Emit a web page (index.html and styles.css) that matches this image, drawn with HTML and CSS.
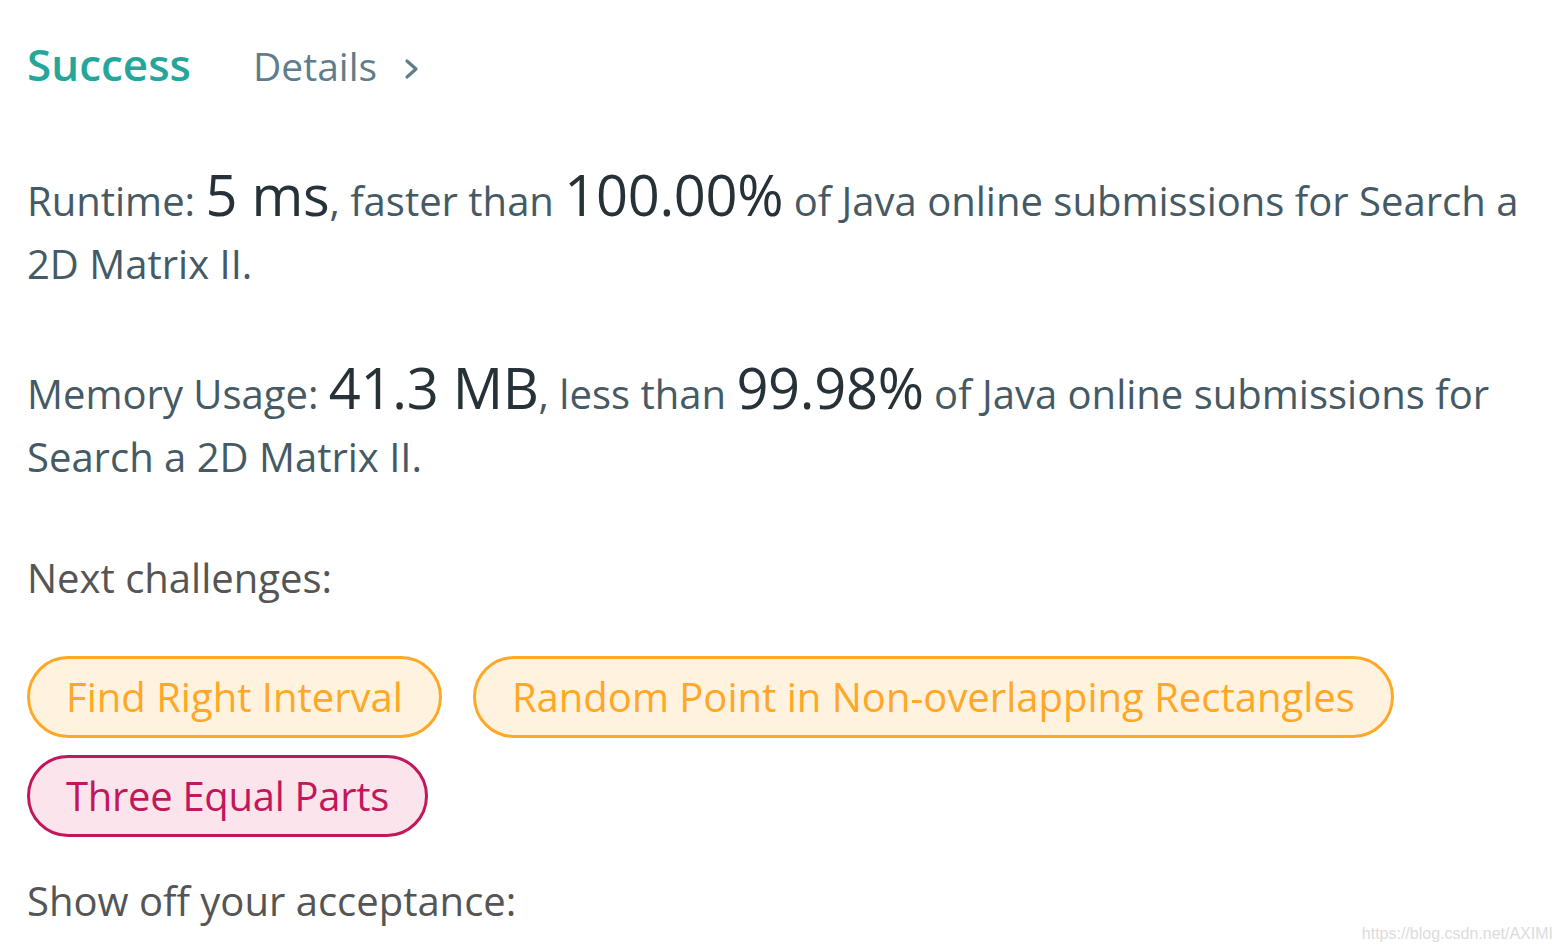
FILE: index.html
```html
<!DOCTYPE html>
<html>
<head>
<meta charset="utf-8">
<link rel="stylesheet" href="styles.css">
</head>
<body>
<div class="page">
  <div class="header">
    <span class="status">Success</span>
    <a class="details">Details
      <svg class="chev" width="16" height="24" viewBox="0 0 16 24"><path d="M3 4 L12 12 L3 20" fill="none" stroke="#607d8b" stroke-width="3.2" stroke-linecap="round" stroke-linejoin="round"/></svg>
    </a>
  </div>
  <p class="stat">Runtime: <strong>5 ms</strong>, faster than <strong>100.00%</strong> of Java online submissions for Search a 2D Matrix II.</p>
  <p class="stat">Memory Usage: <strong>41.3 MB</strong>, less than <strong>99.98%</strong> of Java online submissions for Search a 2D Matrix II.</p>
  <p class="label">Next challenges:</p>
  <div class="pills">
    <span class="pill medium">Find Right Interval</span>
    <span class="pill medium">Random Point in Non-overlapping Rectangles</span>
    <span class="pill hard">Three Equal Parts</span>
  </div>
  <p class="label share">Show off your acceptance:</p>
</div>
<div class="watermark">https://blog.csdn.net/AXIMI</div>
</body>
</html>
```
FILE: styles.css
```css
html, body {
  margin: 0;
  padding: 0;
  background: #fff;
}
body {
  font-family: "Open Sans", "Noto Sans", sans-serif;
  font-size: 42px;
  line-height: 1.5;
  overflow: hidden;
  height: 952px;
  position: relative;
}
.page {
  padding: 31px 30px 0 27px;
}
.header {
  display: flex;
  align-items: baseline;
  gap: 62px;
  height: 82px;
}
.status {
  font-size: 44px;
  font-weight: 600;
  color: #26a69a;
}
.details {
  display: flex;
  align-items: baseline;
  gap: 27px;
  color: #607d8b;
  font-size: 39px;
}
.chev {
  align-self: center;
  position: relative;
  top: 3px;
}
.stat {
  margin: 50px 0 0;
  color: #455a64;
  font-size: 40px;
  line-height: 63px;
}
.stat + .stat {
  margin-top: 61px;
}
.stat strong {
  display: inline-block;
  font-weight: 400;
  font-size: 56px;
  color: #263238;
  line-height: 63px;
  letter-spacing: -0.3px;
}
.label {
  margin: 58px 0 0;
  color: #555;
  font-size: 40px;
  line-height: 63px;
}
.pills {
  display: flex;
  flex-wrap: wrap;
  gap: 17px 31px;
  margin-top: 47px;
  max-width: 1420px;
}
.pill {
  display: inline-block;
  border: 3px solid;
  border-radius: 42px;
  padding: 6px 36px;
  line-height: 64px;
  font-size: 40px;
}
.medium {
  color: #ffa726;
  border-color: #ffa726;
  background: #fff3e0;
}
.hard {
  color: #c2185b;
  border-color: #c2185b;
  background: #fce4ec;
  letter-spacing: -0.3px;
}
.share {
  margin-top: 32px;
}
.watermark {
  position: absolute;
  right: 9px;
  bottom: 8px;
  font-family: "Liberation Sans", Arial, sans-serif;
  font-size: 16px;
  line-height: 20px;
  color: #dcdcdc;
}
```
